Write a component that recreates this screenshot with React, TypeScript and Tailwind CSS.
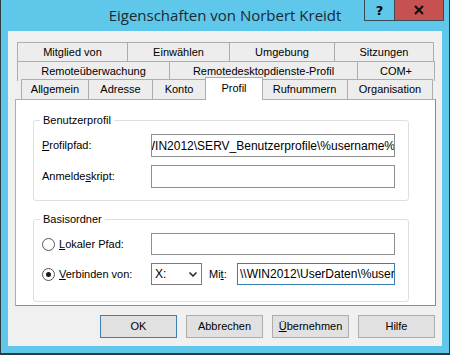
import React from 'react'

const ROWS = [
  { indent: 'pl-[9px]', tabs: [
    { label: 'Mitglied von', w: 'w-[111px]' },
    { label: 'Einwählen', w: 'w-[103px]' },
    { label: 'Umgebung', w: 'w-[106px]' },
    { label: 'Sitzungen', w: 'w-[100px]' },
  ] },
  { indent: 'pl-[9px]', tabs: [
    { label: 'Remoteüberwachung', w: 'w-[153px]' },
    { label: 'Remotedesktopdienste-Profil', w: 'w-[189px]' },
    { label: 'COM+', w: 'w-[78px]' },
  ] },
]

const FRONT = [
  { label: 'Allgemein', w: 'w-[68px]' },
  { label: 'Adresse', w: 'w-[65px]' },
  { label: 'Konto', w: 'w-[54px]' },
  { label: 'Profil', w: 'w-[58px]', active: true },
  { label: 'Rufnummern', w: 'w-[87px]' },
  { label: 'Organisation', w: 'w-[86px]' },
]

function Radio({ checked }: { checked?: boolean }) {
  return (
    <span className="w-[13px] h-[13px] rounded-full border border-[#555] bg-white flex items-center justify-center shrink-0">
      {checked && <span className="w-[5px] h-[5px] rounded-full bg-[#1a1a1a]" />}
    </span>
  )
}

function Btn({ children, primary }: { children: React.ReactNode; primary?: boolean }) {
  return (
    <div
      className={`w-[77px] h-[23px] flex items-center justify-center bg-[#e1e1e1] border ${
        primary ? 'border-[#3c7fb1]' : 'border-[#adadad]'
      }`}
    >
      {children}
    </div>
  )
}

export default function App() {
  return (
    <div className="w-[450px] h-[355px] bg-[#5fc7e9] border-x border-b-2 border-[#2f3a40] flex flex-col font-['Liberation_Sans',Arial,sans-serif] text-[11px] text-black leading-none">
      {/* Title bar */}
      <div className="h-[31px] relative flex items-center justify-center">
        <span className="font-['Open_Sans',sans-serif] text-[15px] text-[#1b2a33] -mt-[1px]">
          Eigenschaften von Norbert Kreidt
        </span>
        <div className="absolute top-0 right-[5px] flex">
          <div className="w-[31px] h-[21px] border border-[#3c4a52] border-t-0 flex items-center justify-center font-bold text-[13px] font-['DejaVu_Sans',sans-serif]">
            ?
          </div>
          <div className="w-[49px] h-[21px] bg-[#c75050] border border-[#3c4a52] border-t-0 border-l-0 flex items-center justify-center">
            <svg viewBox="0 0 10 10" className="w-[10px] h-[10px]">
              <path d="M1 1L9 9M9 1L1 9" stroke="#111" strokeWidth="2.2" />
            </svg>
          </div>
        </div>
      </div>

      {/* Client area */}
      <div className="ml-[7px] mr-[7px] h-[315px] bg-[#f0f0f0] flex flex-col">
        {/* Tabs */}
        <div className="pt-[11px] flex flex-col">
          {ROWS.map((row, i) => (
            <div key={i} className={`flex h-[19px] ${row.indent}`}>
              {row.tabs.map((t, j) => (
                <div
                  key={t.label}
                  className={`${t.w} h-[20px] bg-[#ededed] border border-b-0 border-[#adadad] flex items-center justify-center ${j > 0 ? '-ml-px' : ''}`}
                >
                  {t.label}
                </div>
              ))}
            </div>
          ))}
          <div className="flex h-[19px] pl-[13px] items-end">
            {FRONT.map((t, j) =>
              t.active ? (
                <div
                  key={t.label}
                  className={`${t.w} h-[23px] -mb-px -mx-[1px] relative z-10 bg-white border border-b-0 border-[#adadad] flex items-center justify-center pb-[2px]`}
                >
                  {t.label}
                </div>
              ) : (
                <div
                  key={t.label}
                  className={`${t.w} h-[20px] bg-[#ededed] border border-b-0 border-[#adadad] flex items-center justify-center ${j > 0 ? '-ml-px' : ''}`}
                >
                  {t.label}
                </div>
              )
            )}
          </div>
        </div>

        {/* Panel */}
        <div className="ml-[7px] w-[421px] h-[207px] bg-white border border-[#adadad] border-r-[#8c8c8c] border-b-[#8c8c8c] pt-[20px] pl-[17px] flex flex-col">
          {/* Benutzerprofil */}
          <div className="w-[376px] h-[81px] border border-[#dcdfe3] rounded-[3px] relative flex flex-col pl-[8px] pt-[13px] gap-[8px]">
            <span className="absolute -top-[6px] left-[6px] bg-white px-[3px]">Benutzerprofil</span>
            <div className="flex items-center h-[23px]">
              <span className="w-[109px]"><u>P</u>rofilpfad:</span>
              <div className="w-[244px] h-[23px] border border-[#8e8f8f] bg-white flex items-center justify-end overflow-hidden text-[12px]">
                <span className="whitespace-nowrap -mr-[1px]">\\WIN2012\SERV_Benutzerprofile\%username%</span>
              </div>
            </div>
            <div className="flex items-center h-[23px]">
              <span className="w-[109px]">Anmelde<u>s</u>kript:</span>
              <div className="w-[244px] h-[23px] border border-[#8e8f8f] bg-white" />
            </div>
          </div>

          {/* Basisordner */}
          <div className="mt-[18px] w-[376px] h-[83px] border border-[#dcdfe3] rounded-[3px] relative flex flex-col pl-[8px] pt-[13px] gap-[8px]">
            <span className="absolute -top-[6px] left-[6px] bg-white px-[3px]">Basisordner</span>
            <div className="flex items-center h-[22px]">
              <div className="w-[109px] flex items-center gap-[4px]">
                <Radio />
                <span><u>L</u>okaler Pfad:</span>
              </div>
              <div className="w-[244px] h-[22px] border border-[#8e8f8f] bg-white" />
            </div>
            <div className="flex items-center h-[22px]">
              <div className="w-[109px] flex items-center gap-[4px]">
                <Radio checked />
                <span><u>V</u>erbinden von:</span>
              </div>
              <div className="w-[51px] h-[22px] border border-[#7a7a7a] bg-white flex items-center justify-between pl-[3px] pr-[4px] text-[12px]">
                <span>X:</span>
                <svg viewBox="0 0 8 5" className="w-[8px] h-[5px]">
                  <path d="M0.5 0.5L4 4L7.5 0.5" stroke="#222" strokeWidth="1.5" fill="none" />
                </svg>
              </div>
              <span className="ml-[7px] w-[28px]">Mi<u>t</u>:</span>
              <div className="w-[158px] h-[22px] border border-[#3c7fb1] bg-white flex items-center overflow-hidden pl-[2px] text-[12px]">
                <span className="whitespace-nowrap">\\WIN2012\UserDaten\%username%</span>
              </div>
            </div>
          </div>
        </div>

        {/* Buttons */}
        <div className="mt-[9px] flex justify-end pr-[7px] gap-[9px]">
          <Btn primary>OK</Btn>
          <Btn>Abbrechen</Btn>
          <Btn><span><u>Ü</u>bernehmen</span></Btn>
          <Btn>Hilfe</Btn>
        </div>
      </div>
    </div>
  )
}
